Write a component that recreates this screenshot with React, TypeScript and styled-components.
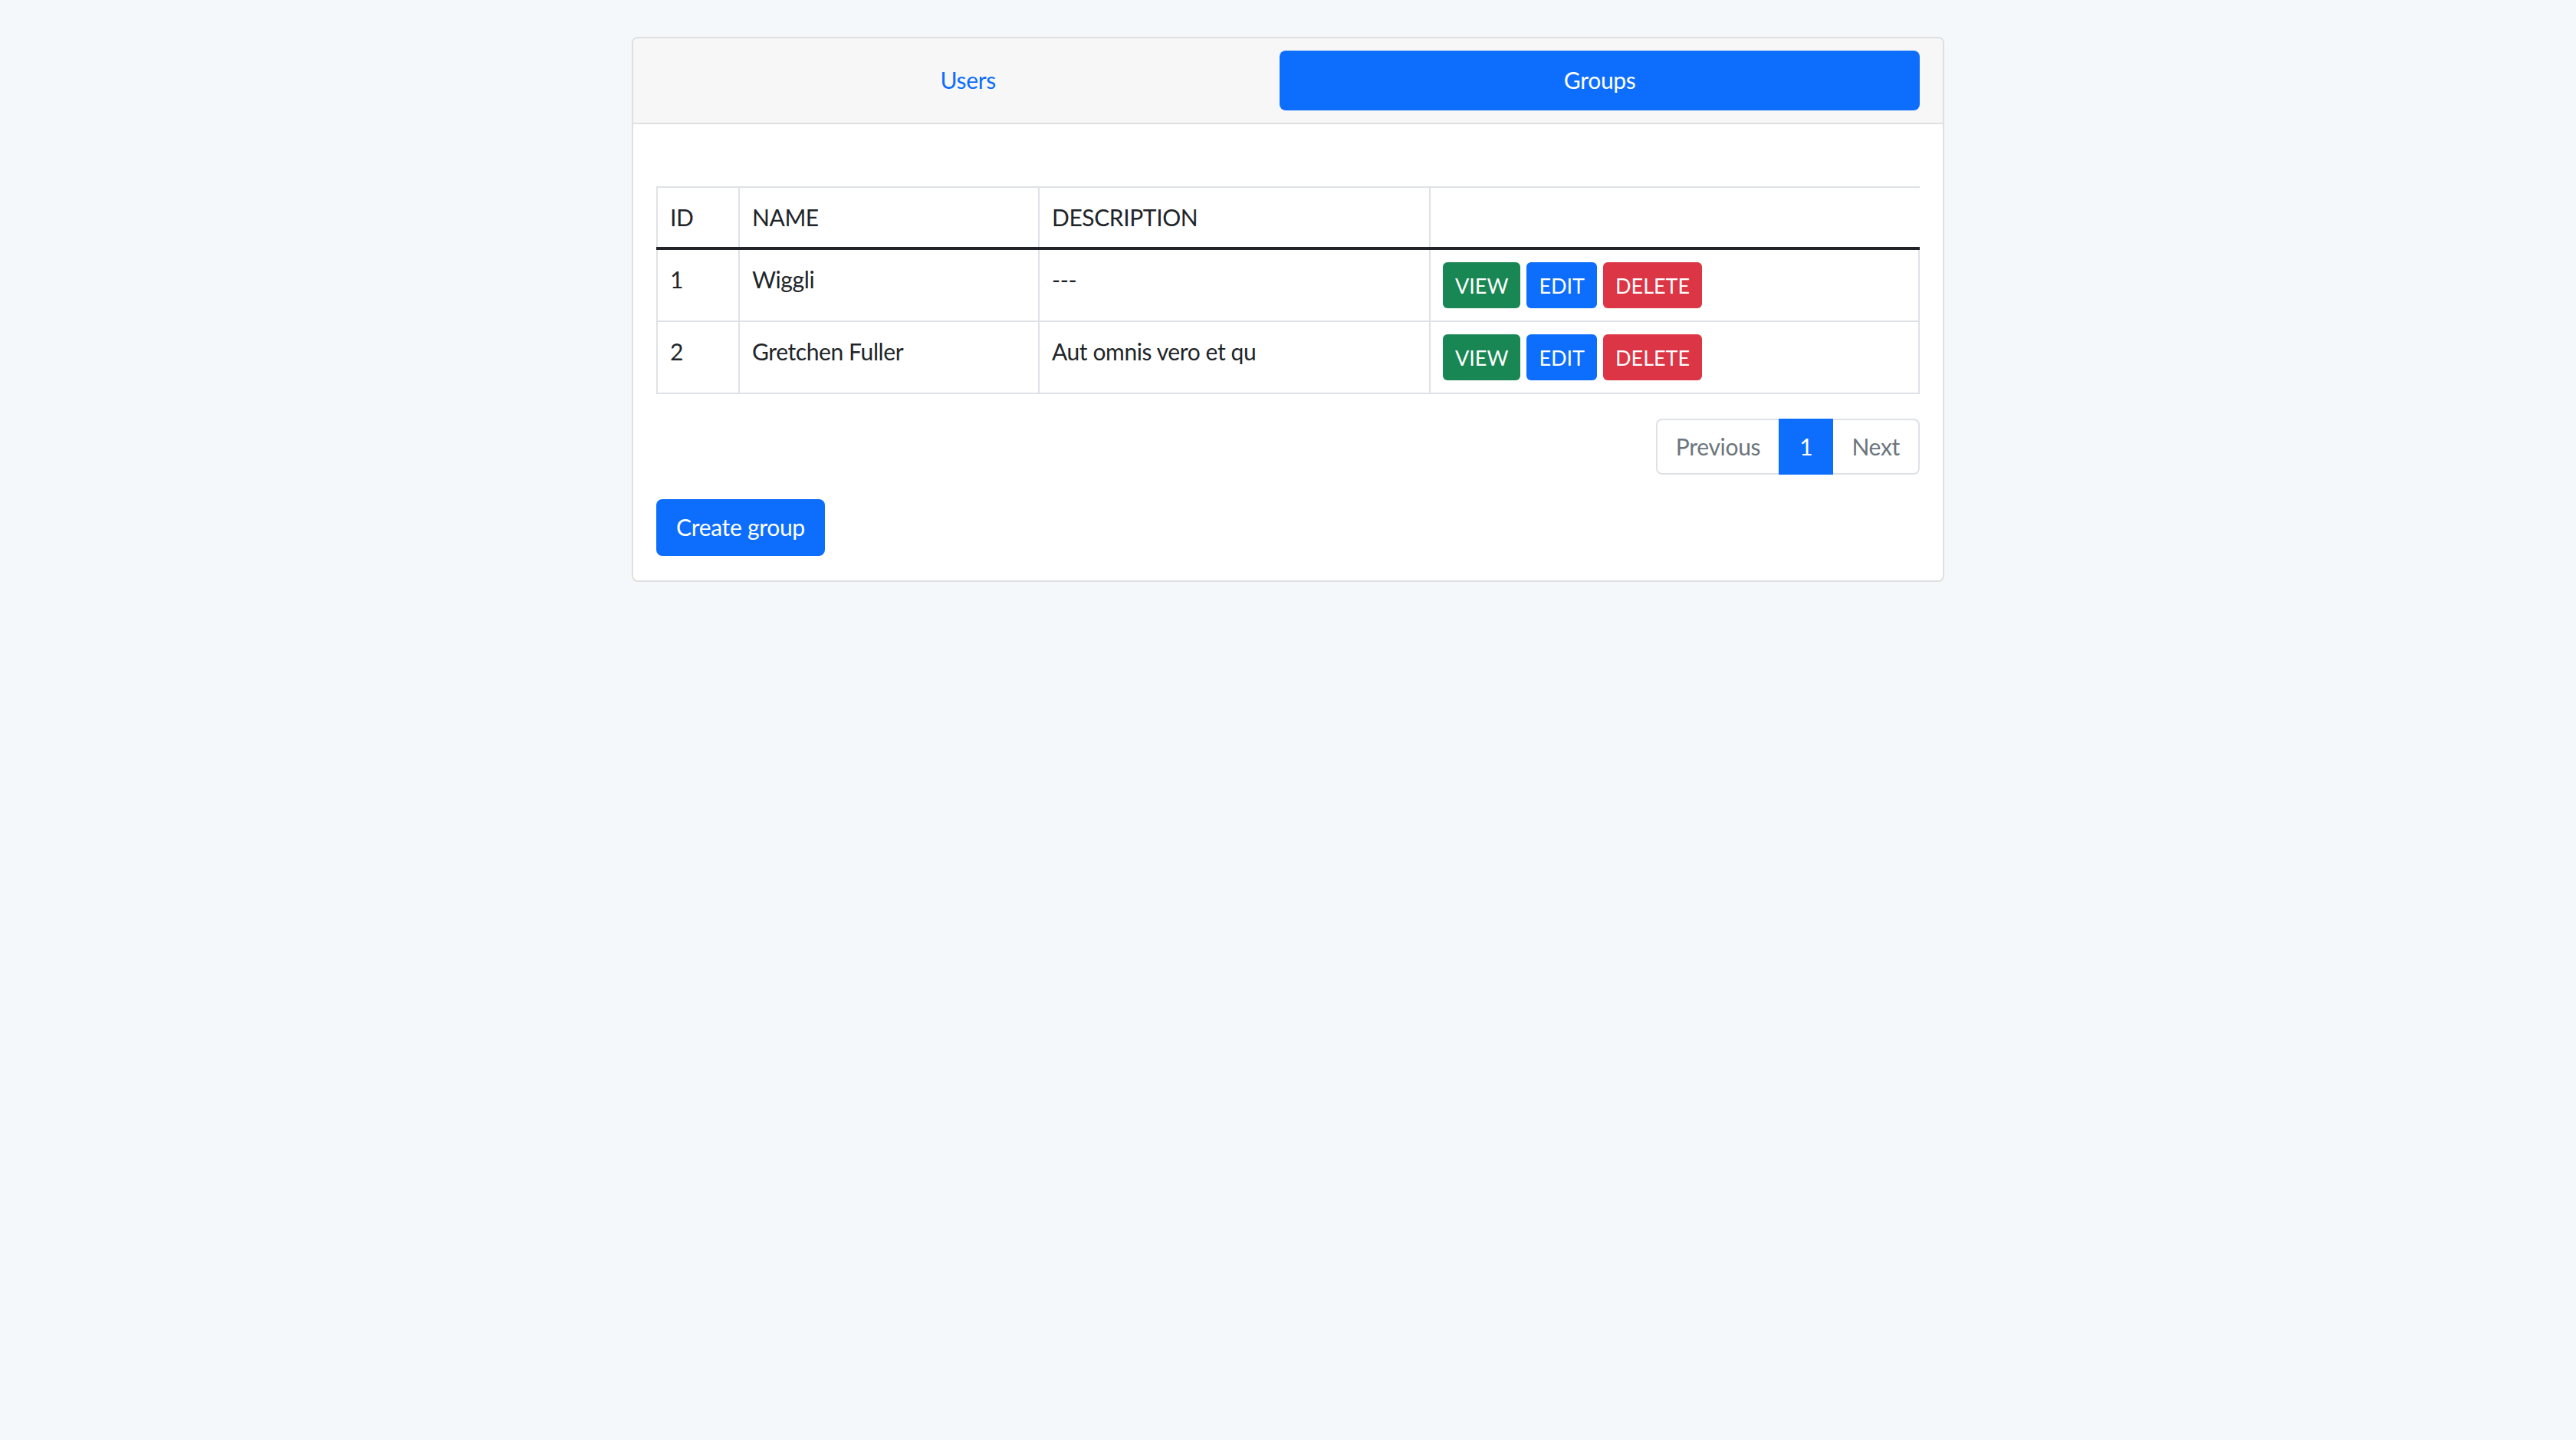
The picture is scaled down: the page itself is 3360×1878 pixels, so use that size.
import styled, { createGlobalStyle, css } from 'styled-components';

const GlobalStyle = createGlobalStyle`
  * {
    box-sizing: border-box;
  }

  body {
    margin: 0;
    background-color: #f4f8fb;
    font-family: Lato, 'Liberation Sans', sans-serif;
    color: #212529;
  }
`;

type Group = {
  id: number;
  name: string;
  description: string;
};

const groups: Group[] = [
  { id: 1, name: 'Wiggli', description: '---' },
  { id: 2, name: 'Gretchen Fuller', description: 'Aut omnis vero et qu' },
];

type Variant = 'success' | 'primary' | 'danger';

const variantColors: Record<Variant, string> = {
  success: '#198754',
  primary: '#0d6efd',
  danger: '#dc3545',
};

const App = () => {
  return (
    <Page>
      <GlobalStyle />
      <Card>
        <CardHeader>
          <Nav>
            <Tab>Users</Tab>
            <Tab $active>Groups</Tab>
          </Nav>
        </CardHeader>
        <CardBody>
          <Table>
            <colgroup>
              <col style={{ width: 107 }} />
              <col style={{ width: 391 }} />
              <col style={{ width: 510 }} />
              <col />
            </colgroup>
            <thead>
              <tr>
                <Th>ID</Th>
                <Th>NAME</Th>
                <Th>DESCRIPTION</Th>
                <Th $last />
              </tr>
            </thead>
            <tbody>
              {groups.map((group) => (
                <tr key={group.id}>
                  <Td>{group.id}</Td>
                  <Td>{group.name}</Td>
                  <Td>{group.description}</Td>
                  <Td>
                    <Actions>
                      <ActionButton $variant="success">VIEW</ActionButton>
                      <ActionButton $variant="primary">EDIT</ActionButton>
                      <ActionButton $variant="danger">DELETE</ActionButton>
                    </Actions>
                  </Td>
                </tr>
              ))}
            </tbody>
          </Table>
          <PaginationRow>
            <Pagination>
              <PageItem $position="first">Previous</PageItem>
              <PageItem $active>1</PageItem>
              <PageItem $position="last">Next</PageItem>
            </Pagination>
          </PaginationRow>
          <CreateButton>Create group</CreateButton>
        </CardBody>
      </Card>
    </Page>
  );
};

export default App;

const Page = styled.div`
  min-height: 1878px;
  padding-top: 48px;
`;

const Card = styled.div`
  width: 1712px;
  margin: 0 auto;
  background-color: #fff;
  border: 2px solid #dfdfdf;
  border-radius: 8px;
  overflow: hidden;
`;

const CardHeader = styled.div`
  background-color: #f7f7f7;
  border-bottom: 2px solid #dfdfdf;
  padding: 16px 30px;
`;

const Nav = styled.div`
  display: flex;
`;

const Tab = styled.button<{ $active?: boolean }>`
  flex: 1 1 auto;
  height: 78px;
  padding: 0 32px 3px;
  border: none;
  border-radius: 8px;
  font-family: inherit;
  font-size: 30px;
  letter-spacing: -0.3px;
  text-align: center;
  cursor: pointer;
  background-color: ${({ $active }) => ($active ? '#0d6efd' : 'transparent')};
  color: ${({ $active }) => ($active ? '#fff' : '#0d6efd')};
`;

const CardBody = styled.div`
  padding: 32px 30px;
`;

const Table = styled.table`
  width: 100%;
  margin-top: 49px;
  margin-bottom: 32px;
  border-collapse: collapse;
  table-layout: fixed;
  font-size: 30px;
  letter-spacing: -0.4px;
  line-height: 44px;
`;

const cellStyles = css`
  border: 2px solid #dee2e6;
  text-align: left;
  vertical-align: top;
  font-weight: 400;
`;

const Th = styled.th<{ $last?: boolean }>`
  ${cellStyles}
  padding: 16px 16px 17px;
  border-bottom: 4px solid #212529;
  ${({ $last }) => $last && 'border-right-color: transparent;'}
`;

const Td = styled.td`
  ${cellStyles}
  padding: 16px;
`;

const Actions = styled.div`
  display: flex;
  gap: 8px;
`;

const ActionButton = styled.button<{ $variant: Variant }>`
  height: 60px;
  padding: 0 16px;
  border: none;
  border-radius: 6px;
  font-family: inherit;
  font-size: 27px;
  color: #fff;
  cursor: pointer;
  background-color: ${({ $variant }) => variantColors[$variant]};
`;

const PaginationRow = styled.div`
  display: flex;
  justify-content: flex-end;
  margin-bottom: 32px;
`;

const Pagination = styled.div`
  display: flex;
`;

const PageItem = styled.div<{ $active?: boolean; $position?: 'first' | 'last' }>`
  height: 73px;
  padding: 0 24px 2px;
  display: flex;
  align-items: center;
  font-size: 30px;
  letter-spacing: -0.3px;
  border: 2px solid #dee2e6;
  color: #6c757d;
  background-color: #fff;
  ${({ $position }) =>
    $position === 'first' &&
    'border-radius: 8px 0 0 8px; border-right: none;'}
  ${({ $position }) =>
    $position === 'last' && 'border-radius: 0 8px 8px 0; border-left: none;'}
  ${({ $active }) =>
    $active &&
    'background-color: #0d6efd; border-color: #0d6efd; color: #fff; padding: 0 25px 2px;'}
`;

const CreateButton = styled.button`
  display: block;
  height: 74px;
  padding: 0 26px 2px;
  border: none;
  border-radius: 8px;
  font-family: inherit;
  font-size: 30px;
  letter-spacing: -0.3px;
  color: #fff;
  background-color: #0d6efd;
  cursor: pointer;
`;
